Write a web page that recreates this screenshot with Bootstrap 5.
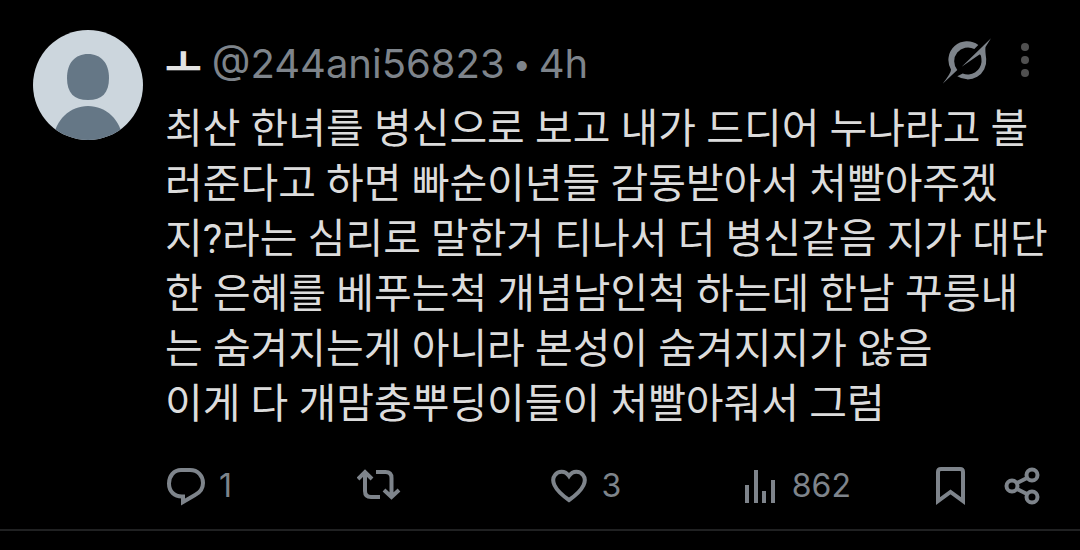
<!DOCTYPE html>
<html lang="ko" data-bs-theme="dark">
<head>
<meta charset="utf-8">
<meta name="viewport" content="width=device-width, initial-scale=1">
<title>Post</title>
<link href="https://cdn.jsdelivr.net/npm/bootstrap@5.3.0/dist/css/bootstrap.min.css" rel="stylesheet">
<style>
body{background:#000;color:#dcdcdc;font-family:Inter,"Noto Sans CJK KR",sans-serif}
.post{padding:30px 30px 21px 33px;gap:22px;border-bottom:2px solid #202122}
.avatar{width:110px;height:110px}
.muted,.act{color:#7e848b}
.post-head{height:68px;font-size:40px;line-height:68px;margin-bottom:4px}
.who{gap:10px}
.display-name{color:#e4e4e4;font-family:"Noto Sans CJK KR",sans-serif;font-weight:700;line-height:60px}
.sep{font-size:32px;margin:0 -2px}
.post-text{font-family:Roboto,"Noto Sans CJK KR",sans-serif;font-size:41px;line-height:55px;margin:0}
.act{background:none;border:0;padding:0;font-size:32px;line-height:44px;gap:14px}
.act svg,.post-head svg{display:block;flex:none}
.actions{margin-top:32px;padding-right:10px}
.tail{gap:36px}
.tools{gap:28px;padding-right:20px}
</style>
</head>
<body>
<main>
<article class="post d-flex align-items-start">
  <svg class="avatar flex-shrink-0" viewBox="0 0 110 110" role="img" aria-label="Avatar"><defs><clipPath id="disc"><circle cx="55" cy="55" r="55"/></clipPath></defs><g clip-path="url(#disc)"><rect width="110" height="110" fill="#ccd6dd"/><path d="M55 24c13 0 21 9 21 24 0 15-7 22-21 22s-21-7-21-22c0-15 8-24 21-24z" fill="#657786"/><path d="M20 110c2-20 17-34 35-34s33 14 35 34z" fill="#657786"/></g></svg>
  <div class="flex-grow-1">
    <header class="post-head d-flex justify-content-between">
      <div class="who d-flex">
        <span class="display-name">ㅗ</span>
        <span class="muted">@244ani56823</span>
        <span class="muted sep">•</span>
        <span class="muted">4h</span>
      </div>
      <div class="tools d-flex align-items-center">
        <button class="act" type="button" aria-label="Grok"><svg width="50" height="54" viewBox="0 0 50 54" fill="currentColor"><path d="M36.300 8A18.700 18.700 0 0 0 9 32.500Q9.500 35.500 .7 46.700L15.300 33A13.800 13.800 0 0 1 32.300 12z"/><path d="M49 1.300L19.700 29.700L37.500 17.500Q39.500 16.500 39.500 25A13.800 13.800 0 0 1 20.700 36.500L15.300 39.300A18.700 18.700 0 0 0 44.200 22Q43 13 43.500 10z"/></svg></button>
        <button class="act" type="button" aria-label="More"><svg width="10" height="44" viewBox="0 0 10 44" fill="#505050"><circle cx="5" cy="5" r="4"/><circle cx="5" cy="18" r="4"/><circle cx="5" cy="31" r="4"/></svg></button>
      </div>
    </header>
    <p class="post-text">최산 한녀를 병신으로 보고 내가 드디어 누나라고 불러준다고 하면 빠순이년들 감동받아서 처빨아주겠지?라는 심리로 말한거 티나서 더 병신같음 지가 대단한 은혜를 베푸는척 개념남인척 하는데 한남 꾸릉내는 숨겨지는게 아니라 본성이 숨겨지지가 않음<br>이게 다 개맘충뿌딩이들이 처빨아줘서 그럼</p>
    <footer class="actions d-flex">
      <div class="row row-cols-4 g-0 flex-grow-1">
        <div><button class="act d-flex align-items-center" type="button"><svg width="40" height="40" viewBox="0 0 40 40" fill="none" stroke="currentColor" stroke-width="4"><path d="M16 4H25C33 4 38 10 38 17C38 23 34 27 30 29L18 36V30.500C9 31 4 25 4 17.500C4 10 9 4 16 4z"/></svg>1</button></div>
        <div><button class="act d-flex align-items-center" type="button" aria-label="Repost"><svg width="44" height="40" viewBox="0 0 44 40" fill="none" stroke="currentColor" stroke-width="4"><path d="M1 15L8 8L15 15M8 8V27Q8 33 14 33H23M19 8H28.500Q34.500 8 34.500 14V33M27 26L34.500 33L42 26"/></svg></button></div>
        <div><button class="act d-flex align-items-center" type="button"><svg width="38" height="40" viewBox="0 0 38 40" fill="none" stroke="currentColor" stroke-width="4"><path d="M19 10C15 4 8 5 5 9C1 14 3 23 19 34C35 23 37 14 33 9C30 5 23 4 19 10z"/></svg>3</button></div>
        <div><button class="act d-flex align-items-center" type="button"><svg width="36" height="40" viewBox="0 0 36 40" fill="none" stroke="currentColor" stroke-width="4"><path d="M5 37V19M14 37V4M22 37V25M31 37V14"/></svg>862</button></div>
      </div>
      <div class="tail d-flex align-items-center">
        <button class="act" type="button" aria-label="Bookmark"><svg width="34" height="40" viewBox="0 0 34 40" fill="none" stroke="currentColor" stroke-width="4"><path d="M4 35V6Q4 3 7 3H26Q29 3 29 6V35L16.500 26z"/></svg></button>
        <button class="act" type="button" aria-label="Share"><svg width="36" height="40" viewBox="0 0 36 40" fill="none" stroke="currentColor" stroke-width="4"><circle cx="8" cy="20" r="5.500"/><circle cx="28" cy="9" r="5.500"/><circle cx="28" cy="31" r="5.500"/><path d="M13 17L23 12M13 23L23 28"/></svg></button>
      </div>
    </footer>
  </div>
</article>
</main>
<script src="https://cdn.jsdelivr.net/npm/bootstrap@5.3.0/dist/js/bootstrap.bundle.min.js"></script>
</body>
</html>
